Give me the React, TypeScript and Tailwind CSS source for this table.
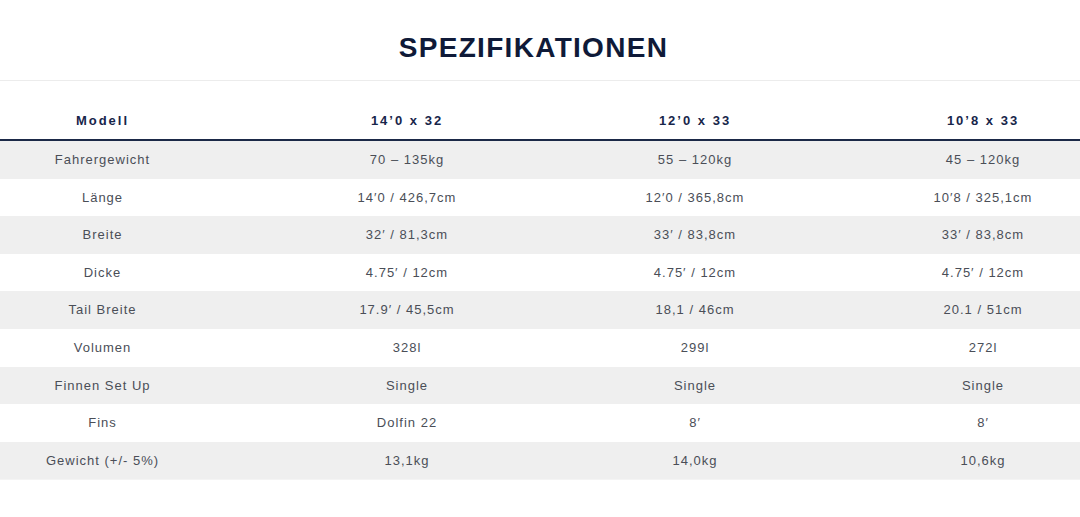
const header = ['Modell', '14’0 x 32', '12’0 x 33', '10’8 x 33']

const rows: string[][] = [
  ['Fahrergewicht', '70 – 135kg', '55 – 120kg', '45 – 120kg'],
  ['Länge', '14′0 / 426,7cm', '12′0 / 365,8cm', '10′8 / 325,1cm'],
  ['Breite', '32′ / 81,3cm', '33′ / 83,8cm', '33′ / 83,8cm'],
  ['Dicke', '4.75′ / 12cm', '4.75′ / 12cm', '4.75′ / 12cm'],
  ['Tail Breite', '17.9′ / 45,5cm', '18,1 / 46cm', '20.1 / 51cm'],
  ['Volumen', '328l', '299l', '272l'],
  ['Finnen Set Up', 'Single', 'Single', 'Single'],
  ['Fins', 'Dolfin 22', '8′', '8′'],
  ['Gewicht (+/- 5%)', '13,1kg', '14,0kg', '10,6kg'],
]

const cols = 'grid grid-cols-[263px_288px_288px_288px]'

export default function App() {
  return (
    <div className="w-[1080px] h-[517px] overflow-hidden bg-white font-['Liberation_Sans',Arial,sans-serif]">
      <div className="h-[81px] flex items-center justify-center border-b border-[#ececec]">
        <h2 className="pt-[16px] pr-[13px] text-[28px] font-bold tracking-[1.3px] text-[#0f1a38]">SPEZIFIKATIONEN</h2>
      </div>

      <div className="pt-[20px]">
        <div className={`${cols} w-[1127px] h-[40px] items-center border-b-2 border-[#1b2947] text-[13px] font-bold tracking-[2px] text-[#17254a]`}>
          {header.map((h, i) => (
            <div key={i} className={i === 0 ? 'text-center pr-[58px] pt-[2px]' : 'text-center pt-[2px]'}>
              {h}
            </div>
          ))}
        </div>

        {rows.map((r, idx) => (
          <div
            key={idx}
            className={`${cols} w-[1127px] h-[37.6px] items-center text-[13px] tracking-[1px] text-[#4a4e57] ${idx % 2 === 0 ? 'bg-[#efefef]' : 'bg-white'}`}
          >
            {r.map((c, i) => (
              <div key={i} className={i === 0 ? 'text-center pr-[58px]' : 'text-center'}>
                {c}
              </div>
            ))}
          </div>
        ))}
        <div className="h-px bg-[#f4f4f4]" />
      </div>
    </div>
  )
}
